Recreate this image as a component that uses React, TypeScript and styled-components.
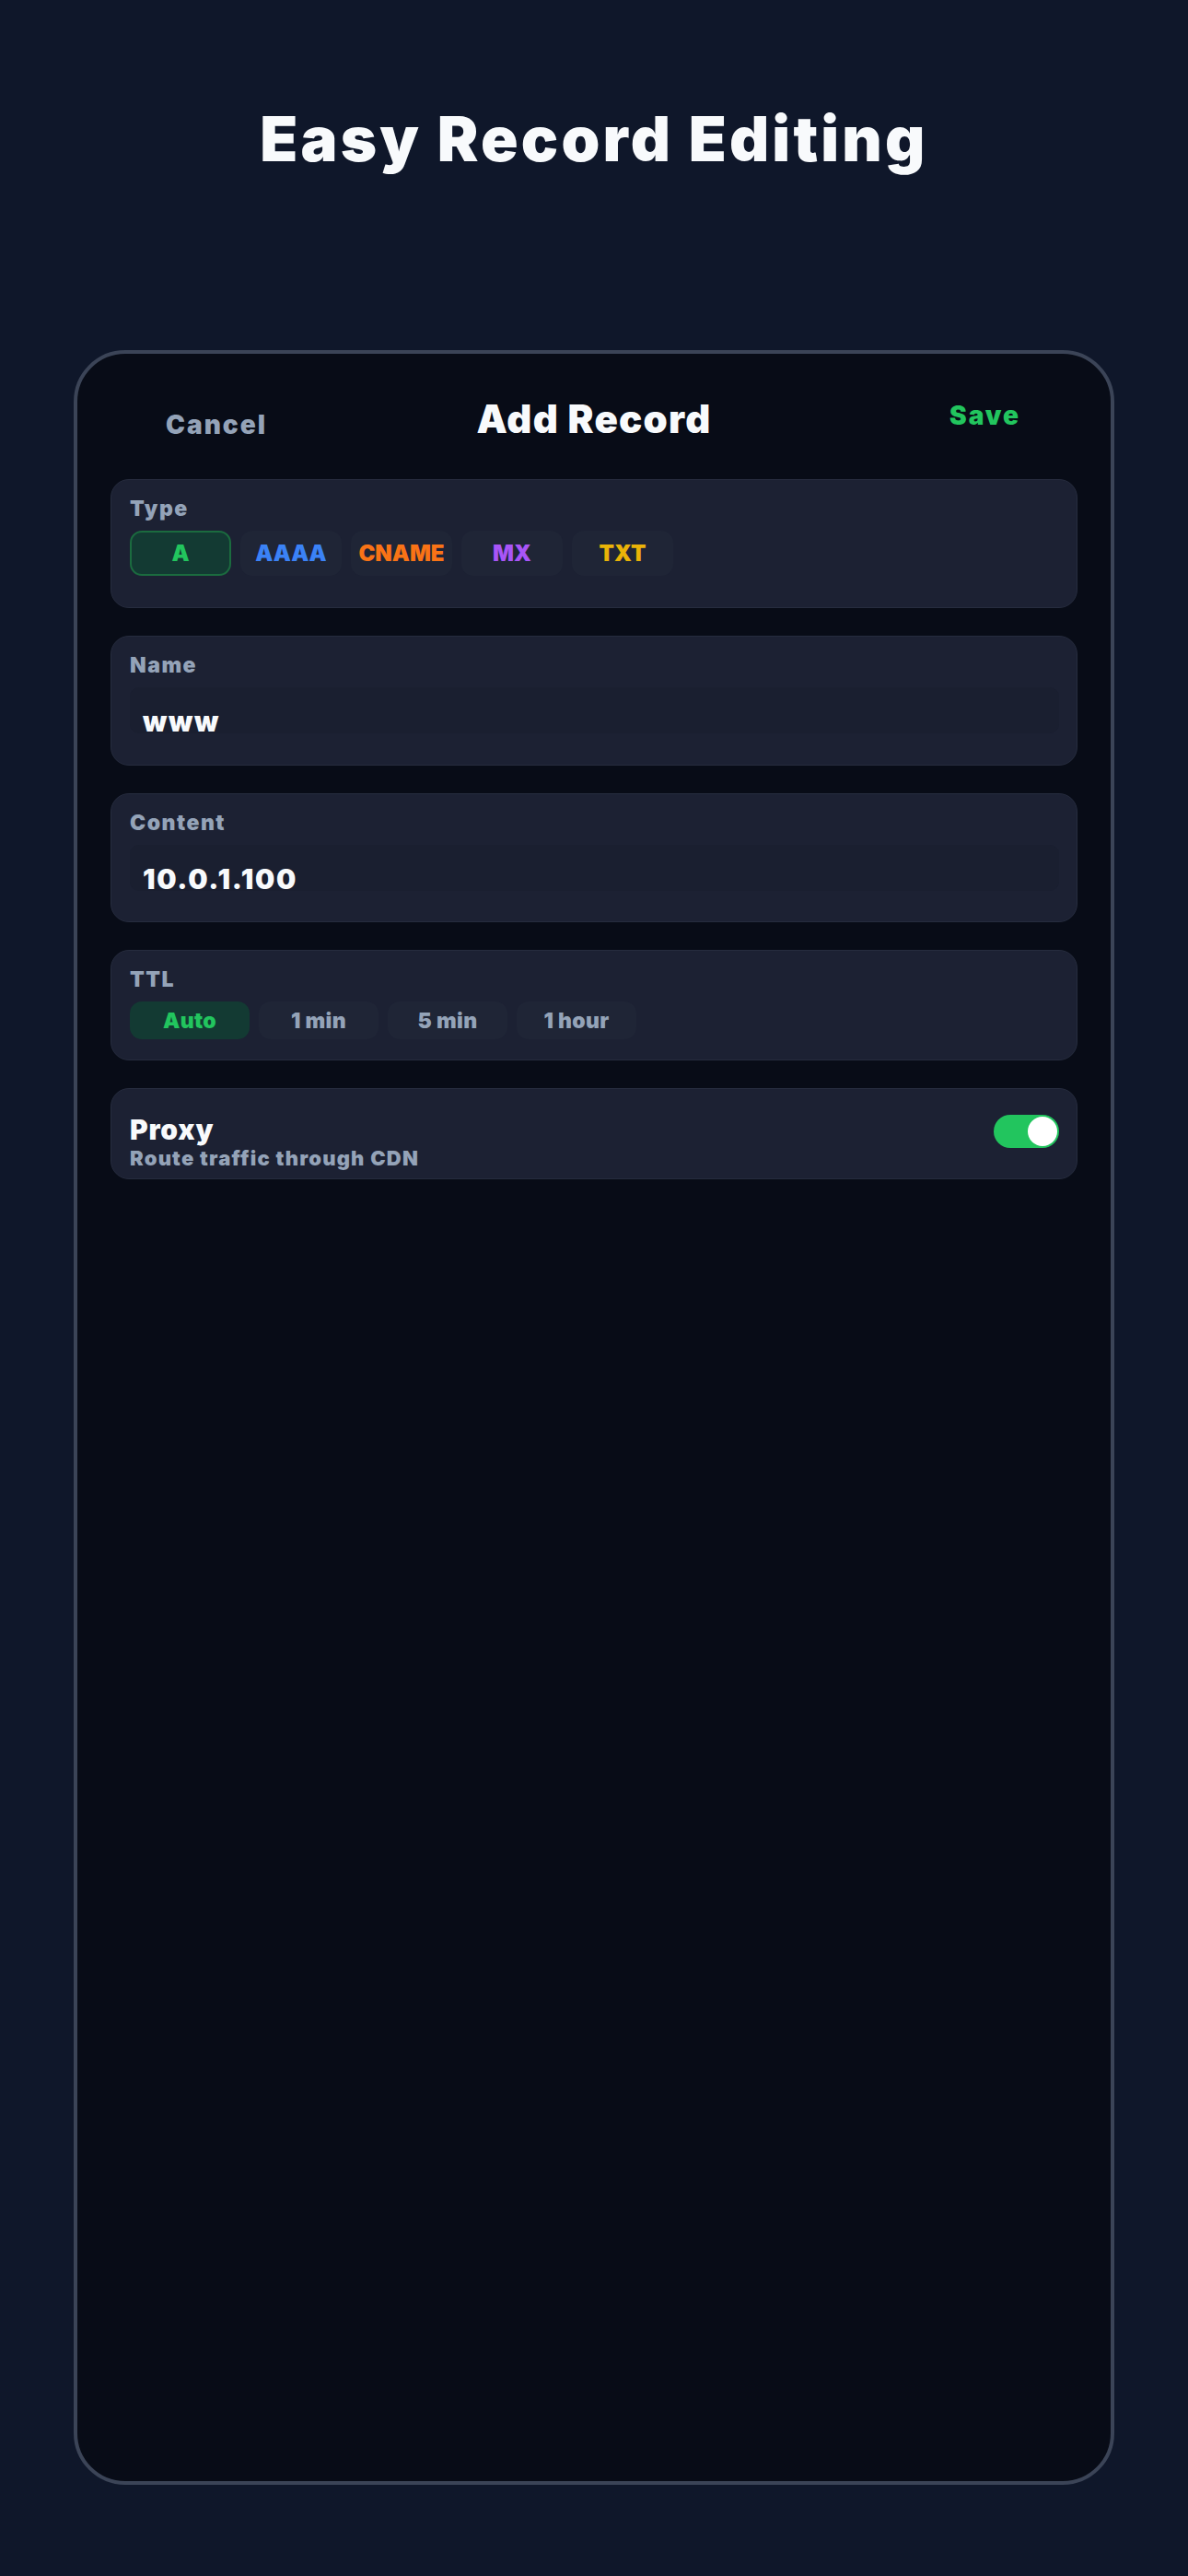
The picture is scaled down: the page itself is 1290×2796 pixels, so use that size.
import styled, { createGlobalStyle } from 'styled-components';

const GlobalStyle = createGlobalStyle`
  html, body {
    margin: 0;
    padding: 0;
    background: #0f172a;
  }
  body {
    font-family: Inter, 'Noto Sans', 'Liberation Sans', sans-serif;
    -webkit-font-smoothing: antialiased;
  }
  * {
    box-sizing: border-box;
  }
`;

const recordTypes = [
  { label: 'A', color: '#22c55e' },
  { label: 'AAAA', color: '#3b82f6' },
  { label: 'CNAME', color: '#f97316' },
  { label: 'MX', color: '#a855f7' },
  { label: 'TXT', color: '#eab308' },
];

const ttlOptions = ['Auto', '1 min', '5 min', '1 hour'];

export default function App() {
  const selectedType = 'A';
  const selectedTtl = 'Auto';

  return (
    <Page>
      <GlobalStyle />
      <Headline>Easy Record Editing</Headline>
      <Phone>
        <Header>
          <CancelButton>Cancel</CancelButton>
          <ScreenTitle>Add Record</ScreenTitle>
          <SaveButton>Save</SaveButton>
        </Header>

        <Form>
          <Card $pb={34}>
            <Label>Type</Label>
            <ChipRow>
              {recordTypes.map((t) => (
                <TypeChip
                  key={t.label}
                  $color={t.color}
                  $active={t.label === selectedType}
                >
                  {t.label}
                </TypeChip>
              ))}
            </ChipRow>
          </Card>

          <Card $pb={34}>
            <Label>Name</Label>
            <Field>www</Field>
          </Card>

          <Card $pb={33}>
            <Label>Content</Label>
            <Field>10.0.1.100</Field>
          </Card>

          <Card $pb={22}>
            <Label>TTL</Label>
            <ChipRow>
              {ttlOptions.map((opt) => (
                <TtlChip key={opt} $active={opt === selectedTtl}>
                  {opt}
                </TtlChip>
              ))}
            </ChipRow>
          </Card>

          <ProxyCard>
            <ProxyText>
              <ProxyTitle>Proxy</ProxyTitle>
              <ProxySub>Route traffic through CDN</ProxySub>
            </ProxyText>
            <Toggle $on>
              <Knob />
            </Toggle>
          </ProxyCard>
        </Form>
      </Phone>
    </Page>
  );
}

const Page = styled.div`
  min-height: 2796px;
  padding: 111px 80px 99px;
  background: #0f172a;
  display: flex;
  flex-direction: column;
  align-items: center;
`;

const Headline = styled.h1`
  margin: 0 0 189px;
  font-size: 67px;
  line-height: 80px;
  font-weight: 900;
  color: #f8fafc;
  letter-spacing: 3.2px;
`;

const Phone = styled.div`
  width: 1130px;
  height: 2317px;
  border: 4px solid #3b4457;
  border-radius: 56px;
  background: #080c17;
  overflow: hidden;
`;

const Header = styled.div`
  display: grid;
  grid-template-columns: 1fr auto 1fr;
  align-items: start;
  padding: 46px 0 40px;
`;

const CancelButton = styled.div`
  justify-self: start;
  margin: 14px 0 0 96px;
  font-size: 28px;
  line-height: 34px;
  font-weight: 900;
  letter-spacing: 2px;
  color: #94a3b8;
`;

const ScreenTitle = styled.div`
  font-size: 42px;
  line-height: 50px;
  font-weight: 900;
  letter-spacing: 1.2px;
  color: #f8fafc;
`;

const SaveButton = styled.div`
  justify-self: end;
  margin: 4px 98px 0 0;
  font-size: 28px;
  line-height: 34px;
  font-weight: 900;
  letter-spacing: 2px;
  color: #22c55e;
`;

const Form = styled.div`
  display: flex;
  flex-direction: column;
  gap: 30px;
  padding: 0 36px;
`;

const Card = styled.div<{ $pb: number }>`
  display: flex;
  flex-direction: column;
  gap: 10px;
  padding: 17px 19px ${(p) => p.$pb}px 20px;
  background: #1c2133;
  border: 1px solid #262c3e;
  border-radius: 20px;
`;

const Label = styled.div`
  font-size: 23px;
  line-height: 28px;
  font-weight: 900;
  letter-spacing: 1.5px;
  color: #94a3b8;
`;

const ChipRow = styled.div`
  display: flex;
  gap: 10px;
`;

const TypeChip = styled.div<{ $color: string; $active?: boolean }>`
  width: 110px;
  height: 49px;
  display: flex;
  align-items: center;
  justify-content: center;
  border-radius: 13px;
  font-size: 24px;
  font-weight: 900;
  color: ${(p) => p.$color};
  background: ${(p) => (p.$active ? '#133a33' : '#1f2536')};
  border: 2px solid ${(p) => (p.$active ? '#1b6b3f' : 'transparent')};
`;

const TtlChip = styled.div<{ $active?: boolean }>`
  width: 130px;
  height: 41px;
  display: flex;
  align-items: center;
  justify-content: center;
  border-radius: 13px;
  font-size: 23px;
  font-weight: 900;
  letter-spacing: 0.3px;
  color: ${(p) => (p.$active ? '#22c55e' : '#94a3b8')};
  background: ${(p) => (p.$active ? '#133a33' : '#1f2536')};
`;

const Field = styled.div`
  height: 50px;
  padding: 22px 16px 0 14px;
  border-radius: 10px;
  background: #1a1f30;
  font-size: 30px;
  line-height: 30px;
  font-weight: 900;
  color: #f8fafc;
  letter-spacing: 1.7px;
`;

const ProxyCard = styled.div`
  display: flex;
  align-items: flex-start;
  justify-content: space-between;
  padding: 26px 19px 9px 20px;
  background: #1c2133;
  border: 1px solid #262c3e;
  border-radius: 20px;
`;

const ProxyText = styled.div`
  display: flex;
  flex-direction: column;
`;

const ProxyTitle = styled.div`
  font-size: 30px;
  line-height: 36px;
  font-weight: 900;
  letter-spacing: 0.8px;
  color: #f8fafc;
`;

const ProxySub = styled.div`
  font-size: 22px;
  line-height: 26px;
  font-weight: 900;
  letter-spacing: 1.2px;
  color: #94a3b8;
`;

const Toggle = styled.div<{ $on?: boolean }>`
  width: 71px;
  height: 36px;
  margin-top: 2px;
  padding: 2px;
  border-radius: 18px;
  background: ${(p) => (p.$on ? '#22c55e' : '#334155')};
  display: flex;
  justify-content: ${(p) => (p.$on ? 'flex-end' : 'flex-start')};
`;

const Knob = styled.div`
  width: 32px;
  height: 32px;
  border-radius: 50%;
  background: #ffffff;
`;
